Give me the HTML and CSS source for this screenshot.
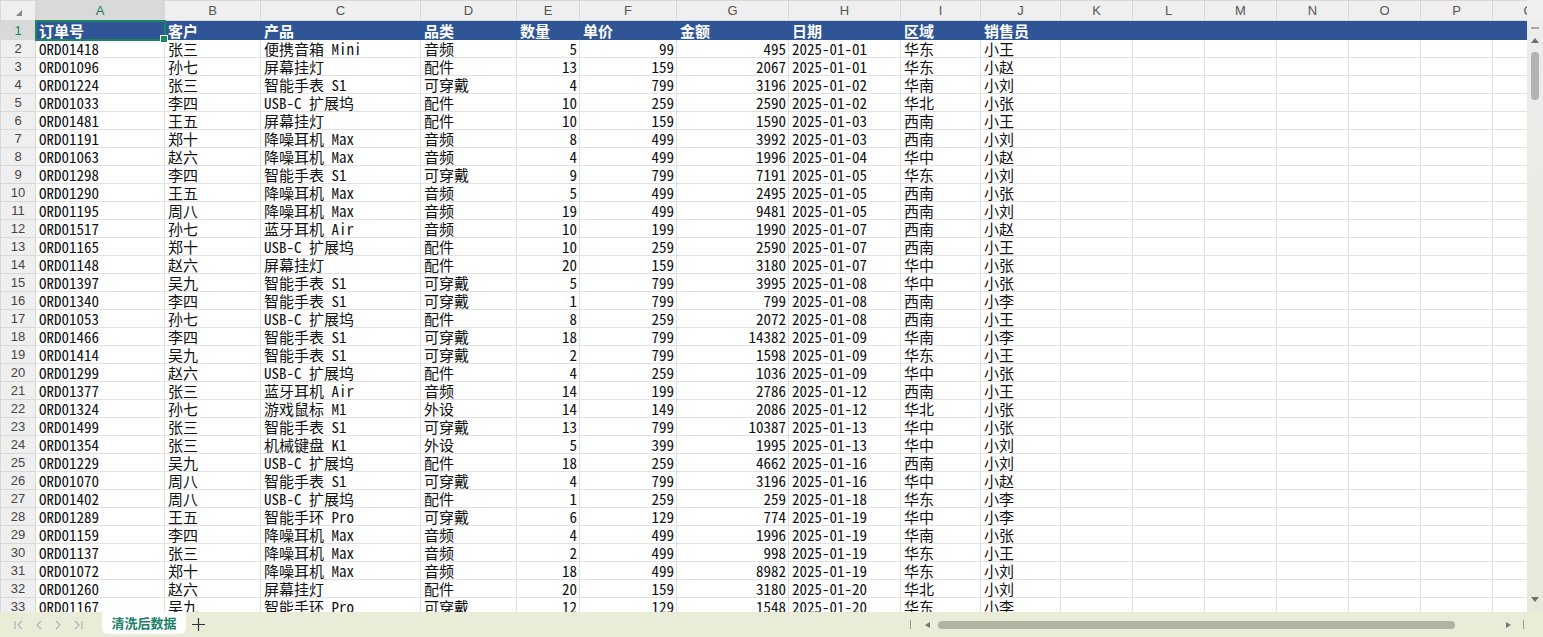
FILE: index.html
```html
<!DOCTYPE html>
<html lang="zh-CN">
<head>
  <meta charset="UTF-8">
  <title>清洗后数据</title>
  <link rel="stylesheet" href="styles.css">
</head>
<body>
  <div class="app">
    <div class="main">
      <div class="grid-wrap">
        <table class="grid">
          <colgroup>
            <col class="c-rn"><col class="c-a"><col class="c-b"><col class="c-c"><col class="c-d"><col class="c-e"><col class="c-f"><col class="c-g"><col class="c-h"><col class="c-i"><col class="c-j"><col class="c-x"><col class="c-x"><col class="c-x"><col class="c-x"><col class="c-x"><col class="c-x"><col class="c-x">
          </colgroup>
          <thead>
            <tr class="letters">
              <th class="corner"><span class="tri"></span></th>
              <th class="sel">A</th><th>B</th><th>C</th><th>D</th><th>E</th><th>F</th><th>G</th><th>H</th><th>I</th><th>J</th><th>K</th><th>L</th><th>M</th><th>N</th><th>O</th><th>P</th><th>Q</th>
            </tr>
          </thead>
          <tbody>
            <tr class="head"><th class="sel">1</th><td class="active">订单号</td><td>客户</td><td>产品</td><td>品类</td><td>数量</td><td>单价</td><td>金额</td><td>日期</td><td>区域</td><td>销售员</td><td></td><td></td><td></td><td></td><td></td><td></td><td></td></tr>
            <tr><th>2</th><td>ORD01418</td><td>张三</td><td>便携音箱 Mini</td><td>音频</td><td class="n">5</td><td class="n">99</td><td class="n">495</td><td>2025-01-01</td><td>华东</td><td>小王</td><td></td><td></td><td></td><td></td><td></td><td></td><td></td></tr>
            <tr><th>3</th><td>ORD01096</td><td>孙七</td><td>屏幕挂灯</td><td>配件</td><td class="n">13</td><td class="n">159</td><td class="n">2067</td><td>2025-01-01</td><td>华东</td><td>小赵</td><td></td><td></td><td></td><td></td><td></td><td></td><td></td></tr>
            <tr><th>4</th><td>ORD01224</td><td>张三</td><td>智能手表 S1</td><td>可穿戴</td><td class="n">4</td><td class="n">799</td><td class="n">3196</td><td>2025-01-02</td><td>华南</td><td>小刘</td><td></td><td></td><td></td><td></td><td></td><td></td><td></td></tr>
            <tr><th>5</th><td>ORD01033</td><td>李四</td><td>USB-C 扩展坞</td><td>配件</td><td class="n">10</td><td class="n">259</td><td class="n">2590</td><td>2025-01-02</td><td>华北</td><td>小张</td><td></td><td></td><td></td><td></td><td></td><td></td><td></td></tr>
            <tr><th>6</th><td>ORD01481</td><td>王五</td><td>屏幕挂灯</td><td>配件</td><td class="n">10</td><td class="n">159</td><td class="n">1590</td><td>2025-01-03</td><td>西南</td><td>小王</td><td></td><td></td><td></td><td></td><td></td><td></td><td></td></tr>
            <tr><th>7</th><td>ORD01191</td><td>郑十</td><td>降噪耳机 Max</td><td>音频</td><td class="n">8</td><td class="n">499</td><td class="n">3992</td><td>2025-01-03</td><td>西南</td><td>小刘</td><td></td><td></td><td></td><td></td><td></td><td></td><td></td></tr>
            <tr><th>8</th><td>ORD01063</td><td>赵六</td><td>降噪耳机 Max</td><td>音频</td><td class="n">4</td><td class="n">499</td><td class="n">1996</td><td>2025-01-04</td><td>华中</td><td>小赵</td><td></td><td></td><td></td><td></td><td></td><td></td><td></td></tr>
            <tr><th>9</th><td>ORD01298</td><td>李四</td><td>智能手表 S1</td><td>可穿戴</td><td class="n">9</td><td class="n">799</td><td class="n">7191</td><td>2025-01-05</td><td>华东</td><td>小刘</td><td></td><td></td><td></td><td></td><td></td><td></td><td></td></tr>
            <tr><th>10</th><td>ORD01290</td><td>王五</td><td>降噪耳机 Max</td><td>音频</td><td class="n">5</td><td class="n">499</td><td class="n">2495</td><td>2025-01-05</td><td>西南</td><td>小张</td><td></td><td></td><td></td><td></td><td></td><td></td><td></td></tr>
            <tr><th>11</th><td>ORD01195</td><td>周八</td><td>降噪耳机 Max</td><td>音频</td><td class="n">19</td><td class="n">499</td><td class="n">9481</td><td>2025-01-05</td><td>西南</td><td>小刘</td><td></td><td></td><td></td><td></td><td></td><td></td><td></td></tr>
            <tr><th>12</th><td>ORD01517</td><td>孙七</td><td>蓝牙耳机 Air</td><td>音频</td><td class="n">10</td><td class="n">199</td><td class="n">1990</td><td>2025-01-07</td><td>西南</td><td>小赵</td><td></td><td></td><td></td><td></td><td></td><td></td><td></td></tr>
            <tr><th>13</th><td>ORD01165</td><td>郑十</td><td>USB-C 扩展坞</td><td>配件</td><td class="n">10</td><td class="n">259</td><td class="n">2590</td><td>2025-01-07</td><td>西南</td><td>小王</td><td></td><td></td><td></td><td></td><td></td><td></td><td></td></tr>
            <tr><th>14</th><td>ORD01148</td><td>赵六</td><td>屏幕挂灯</td><td>配件</td><td class="n">20</td><td class="n">159</td><td class="n">3180</td><td>2025-01-07</td><td>华中</td><td>小张</td><td></td><td></td><td></td><td></td><td></td><td></td><td></td></tr>
            <tr><th>15</th><td>ORD01397</td><td>吴九</td><td>智能手表 S1</td><td>可穿戴</td><td class="n">5</td><td class="n">799</td><td class="n">3995</td><td>2025-01-08</td><td>华中</td><td>小张</td><td></td><td></td><td></td><td></td><td></td><td></td><td></td></tr>
            <tr><th>16</th><td>ORD01340</td><td>李四</td><td>智能手表 S1</td><td>可穿戴</td><td class="n">1</td><td class="n">799</td><td class="n">799</td><td>2025-01-08</td><td>西南</td><td>小李</td><td></td><td></td><td></td><td></td><td></td><td></td><td></td></tr>
            <tr><th>17</th><td>ORD01053</td><td>孙七</td><td>USB-C 扩展坞</td><td>配件</td><td class="n">8</td><td class="n">259</td><td class="n">2072</td><td>2025-01-08</td><td>西南</td><td>小王</td><td></td><td></td><td></td><td></td><td></td><td></td><td></td></tr>
            <tr><th>18</th><td>ORD01466</td><td>李四</td><td>智能手表 S1</td><td>可穿戴</td><td class="n">18</td><td class="n">799</td><td class="n">14382</td><td>2025-01-09</td><td>华南</td><td>小李</td><td></td><td></td><td></td><td></td><td></td><td></td><td></td></tr>
            <tr><th>19</th><td>ORD01414</td><td>吴九</td><td>智能手表 S1</td><td>可穿戴</td><td class="n">2</td><td class="n">799</td><td class="n">1598</td><td>2025-01-09</td><td>华东</td><td>小王</td><td></td><td></td><td></td><td></td><td></td><td></td><td></td></tr>
            <tr><th>20</th><td>ORD01299</td><td>赵六</td><td>USB-C 扩展坞</td><td>配件</td><td class="n">4</td><td class="n">259</td><td class="n">1036</td><td>2025-01-09</td><td>华中</td><td>小张</td><td></td><td></td><td></td><td></td><td></td><td></td><td></td></tr>
            <tr><th>21</th><td>ORD01377</td><td>张三</td><td>蓝牙耳机 Air</td><td>音频</td><td class="n">14</td><td class="n">199</td><td class="n">2786</td><td>2025-01-12</td><td>西南</td><td>小王</td><td></td><td></td><td></td><td></td><td></td><td></td><td></td></tr>
            <tr><th>22</th><td>ORD01324</td><td>孙七</td><td>游戏鼠标 M1</td><td>外设</td><td class="n">14</td><td class="n">149</td><td class="n">2086</td><td>2025-01-12</td><td>华北</td><td>小张</td><td></td><td></td><td></td><td></td><td></td><td></td><td></td></tr>
            <tr><th>23</th><td>ORD01499</td><td>张三</td><td>智能手表 S1</td><td>可穿戴</td><td class="n">13</td><td class="n">799</td><td class="n">10387</td><td>2025-01-13</td><td>华中</td><td>小张</td><td></td><td></td><td></td><td></td><td></td><td></td><td></td></tr>
            <tr><th>24</th><td>ORD01354</td><td>张三</td><td>机械键盘 K1</td><td>外设</td><td class="n">5</td><td class="n">399</td><td class="n">1995</td><td>2025-01-13</td><td>华中</td><td>小刘</td><td></td><td></td><td></td><td></td><td></td><td></td><td></td></tr>
            <tr><th>25</th><td>ORD01229</td><td>吴九</td><td>USB-C 扩展坞</td><td>配件</td><td class="n">18</td><td class="n">259</td><td class="n">4662</td><td>2025-01-16</td><td>西南</td><td>小刘</td><td></td><td></td><td></td><td></td><td></td><td></td><td></td></tr>
            <tr><th>26</th><td>ORD01070</td><td>周八</td><td>智能手表 S1</td><td>可穿戴</td><td class="n">4</td><td class="n">799</td><td class="n">3196</td><td>2025-01-16</td><td>华中</td><td>小赵</td><td></td><td></td><td></td><td></td><td></td><td></td><td></td></tr>
            <tr><th>27</th><td>ORD01402</td><td>周八</td><td>USB-C 扩展坞</td><td>配件</td><td class="n">1</td><td class="n">259</td><td class="n">259</td><td>2025-01-18</td><td>华东</td><td>小李</td><td></td><td></td><td></td><td></td><td></td><td></td><td></td></tr>
            <tr><th>28</th><td>ORD01289</td><td>王五</td><td>智能手环 Pro</td><td>可穿戴</td><td class="n">6</td><td class="n">129</td><td class="n">774</td><td>2025-01-19</td><td>华中</td><td>小李</td><td></td><td></td><td></td><td></td><td></td><td></td><td></td></tr>
            <tr><th>29</th><td>ORD01159</td><td>李四</td><td>降噪耳机 Max</td><td>音频</td><td class="n">4</td><td class="n">499</td><td class="n">1996</td><td>2025-01-19</td><td>华南</td><td>小张</td><td></td><td></td><td></td><td></td><td></td><td></td><td></td></tr>
            <tr><th>30</th><td>ORD01137</td><td>张三</td><td>降噪耳机 Max</td><td>音频</td><td class="n">2</td><td class="n">499</td><td class="n">998</td><td>2025-01-19</td><td>华东</td><td>小王</td><td></td><td></td><td></td><td></td><td></td><td></td><td></td></tr>
            <tr><th>31</th><td>ORD01072</td><td>郑十</td><td>降噪耳机 Max</td><td>音频</td><td class="n">18</td><td class="n">499</td><td class="n">8982</td><td>2025-01-19</td><td>华东</td><td>小刘</td><td></td><td></td><td></td><td></td><td></td><td></td><td></td></tr>
            <tr><th>32</th><td>ORD01260</td><td>赵六</td><td>屏幕挂灯</td><td>配件</td><td class="n">20</td><td class="n">159</td><td class="n">3180</td><td>2025-01-20</td><td>华北</td><td>小刘</td><td></td><td></td><td></td><td></td><td></td><td></td><td></td></tr>
            <tr><th>33</th><td>ORD01167</td><td>吴九</td><td>智能手环 Pro</td><td>可穿戴</td><td class="n">12</td><td class="n">129</td><td class="n">1548</td><td>2025-01-20</td><td>华东</td><td>小李</td><td></td><td></td><td></td><td></td><td></td><td></td><td></td></tr>
          </tbody>
        </table>
      </div>

      <div class="vscroll">
        <div class="vs-top"></div>
        <div class="vs-dash"></div>
        <div class="vs-up"></div>
        <div class="vs-thumb"></div>
        <div class="vs-down"></div>
      </div>
    </div>

    <div class="tabbar">
      <div class="nav">
        <svg width="9" height="10" viewBox="0 0 9 10"><path d="M1 1v8M8 1L4 5l4 4" fill="none" stroke="#b3b3b3" stroke-width="1.2"/></svg>
        <svg width="6" height="10" viewBox="0 0 6 10"><path d="M5 1L1 5l4 4" fill="none" stroke="#b3b3b3" stroke-width="1.2"/></svg>
        <svg width="6" height="10" viewBox="0 0 6 10"><path d="M1 1l4 4-4 4" fill="none" stroke="#b3b3b3" stroke-width="1.2"/></svg>
        <svg width="9" height="10" viewBox="0 0 9 10"><path d="M1 1l4 4-4 4M8 1v8" fill="none" stroke="#b3b3b3" stroke-width="1.2"/></svg>
      </div>
      <div class="tab">清洗后数据</div>
      <svg class="add" width="13" height="13" viewBox="0 0 13 13"><path d="M6.5 0v13M0 6.5h13" stroke="#333" stroke-width="1.2"/></svg>
      <div class="hscroll">
        <span class="hs-sep"></span>
        <span class="hs-left"></span>
        <span class="hs-thumb"></span>
        <span class="hs-right"></span>
        <span class="hs-sep end"></span>
      </div>
    </div>
  </div>
</body>
</html>
```

FILE: styles.css
```css
* {
  box-sizing: border-box;
}

body {
  margin: 0;
  padding: 0;
  overflow: hidden;
  background: #ffffff;
  font-family: "Noto Sans Mono CJK SC", "Liberation Mono", "Noto Sans CJK SC", monospace;
}

.app {
  display: flex;
  flex-direction: column;
  height: 100vh;
}

.main {
  flex: 1;
  display: flex;
  min-height: 0;
}

.grid-wrap {
  flex: 1;
  overflow: hidden;
}

/* grille */
.grid {
  border-collapse: collapse;
  table-layout: fixed;
  width: 1564px;
}

.c-rn { width: 35px; }
.c-a { width: 129px; }
.c-b { width: 96px; }
.c-c { width: 160px; }
.c-d { width: 96px; }
.c-e { width: 63px; }
.c-f { width: 97px; }
.c-g { width: 112px; }
.c-h { width: 112px; }
.c-i { width: 80px; }
.c-j { width: 80px; }
.c-x { width: 72px; }

.grid td {
  height: 18px;
  padding: 0 2px 0 3px;
  border: 1px solid #e1e1e1;
  font-size: 15px;
  line-height: 16px;
  color: #111;
  vertical-align: bottom;
  white-space: nowrap;
  overflow: hidden;
}

.grid td.n {
  text-align: right;
}

.grid th {
  background: #efefef;
  border: 1px solid #d8d8d8;
  font-family: "Liberation Sans", Arial, sans-serif;
  font-weight: normal;
  font-size: 13px;
  color: #444;
  text-align: center;
  padding: 0;
}

.letters th {
  height: 20px;
  color: #555;
}

.grid th.sel {
  background: #d9d9d9;
  color: #1a7f5c;
}

.corner {
  position: relative;
}

.tri {
  position: absolute;
  left: 15px;
  top: 9px;
  width: 0;
  height: 0;
  border-left: 6px solid transparent;
  border-bottom: 6px solid #888;
}

/* ligne d'en-tete */
.head td {
  height: 19px;
  background: #2f5597;
  border-color: #2f5597;
  color: #ffffff;
  font-family: "Noto Sans CJK SC", sans-serif;
  font-weight: bold;
  font-size: 15px;
  line-height: 17px;
}

.head td.active {
  position: relative;
  overflow: visible;
  outline: 2px solid #1a8760;
  outline-offset: -1px;
}

.head td.active::after {
  content: "";
  position: absolute;
  right: -4px;
  bottom: -4px;
  width: 6px;
  height: 6px;
  background: #1a8760;
  border: 1px solid #fff;
  z-index: 2;
}

/* barre verticale */
.vscroll {
  width: 16px;
  display: flex;
  flex-direction: column;
  align-items: center;
  background: linear-gradient(#ececec, #e7eada);
}

.vs-top {
  width: 100%;
  height: 20px;
  background: #efefef;
}

.vs-dash {
  width: 8px;
  height: 2px;
  margin-top: 7px;
  background: #a8a8a8;
}

.vs-up {
  margin-top: 9px;
  width: 0;
  height: 0;
  border-left: 4px solid transparent;
  border-right: 4px solid transparent;
  border-bottom: 5px solid #6e6e6e;
}

.vs-thumb {
  margin-top: 9px;
  width: 8px;
  height: 48px;
  border-radius: 4px;
  background: #b3b3b3;
}

.vs-down {
  margin-top: auto;
  margin-bottom: 10px;
  width: 0;
  height: 0;
  border-left: 4px solid transparent;
  border-right: 4px solid transparent;
  border-top: 5px solid #6e6e6e;
}

/* onglets */
.tabbar {
  height: 25px;
  flex-shrink: 0;
  display: flex;
  align-items: flex-start;
  background: #e9ecd6;
}

.nav {
  display: flex;
  align-items: center;
  gap: 13px;
  height: 25px;
  padding-left: 14px;
  width: 102px;
}

.tab {
  width: 84px;
  height: 22px;
  background: #ffffff;
  border-radius: 0 0 6px 6px;
  font-family: "Noto Sans CJK SC", sans-serif;
  font-weight: bold;
  font-size: 13px;
  line-height: 22px;
  color: #1b7f68;
  text-align: center;
}

.add {
  margin: 6px 0 0 6px;
}

.hscroll {
  margin-left: auto;
  width: 638px;
  height: 25px;
  display: flex;
  align-items: center;
  padding: 0 19px 0 5px;
}

.hs-sep {
  width: 1px;
  height: 9px;
  background: #9a9a9a;
}

.hs-sep.end {
  margin-left: 12px;
}

.hs-left {
  margin-left: 14px;
  width: 0;
  height: 0;
  border-top: 3px solid transparent;
  border-bottom: 3px solid transparent;
  border-right: 5px solid #777;
}

.hs-thumb {
  margin-left: 8px;
  width: 517px;
  height: 8px;
  border-radius: 4px;
  background: #b1b3a1;
}

.hs-right {
  margin-left: auto;
  width: 0;
  height: 0;
  border-top: 3px solid transparent;
  border-bottom: 3px solid transparent;
  border-left: 5px solid #777;
}
```
